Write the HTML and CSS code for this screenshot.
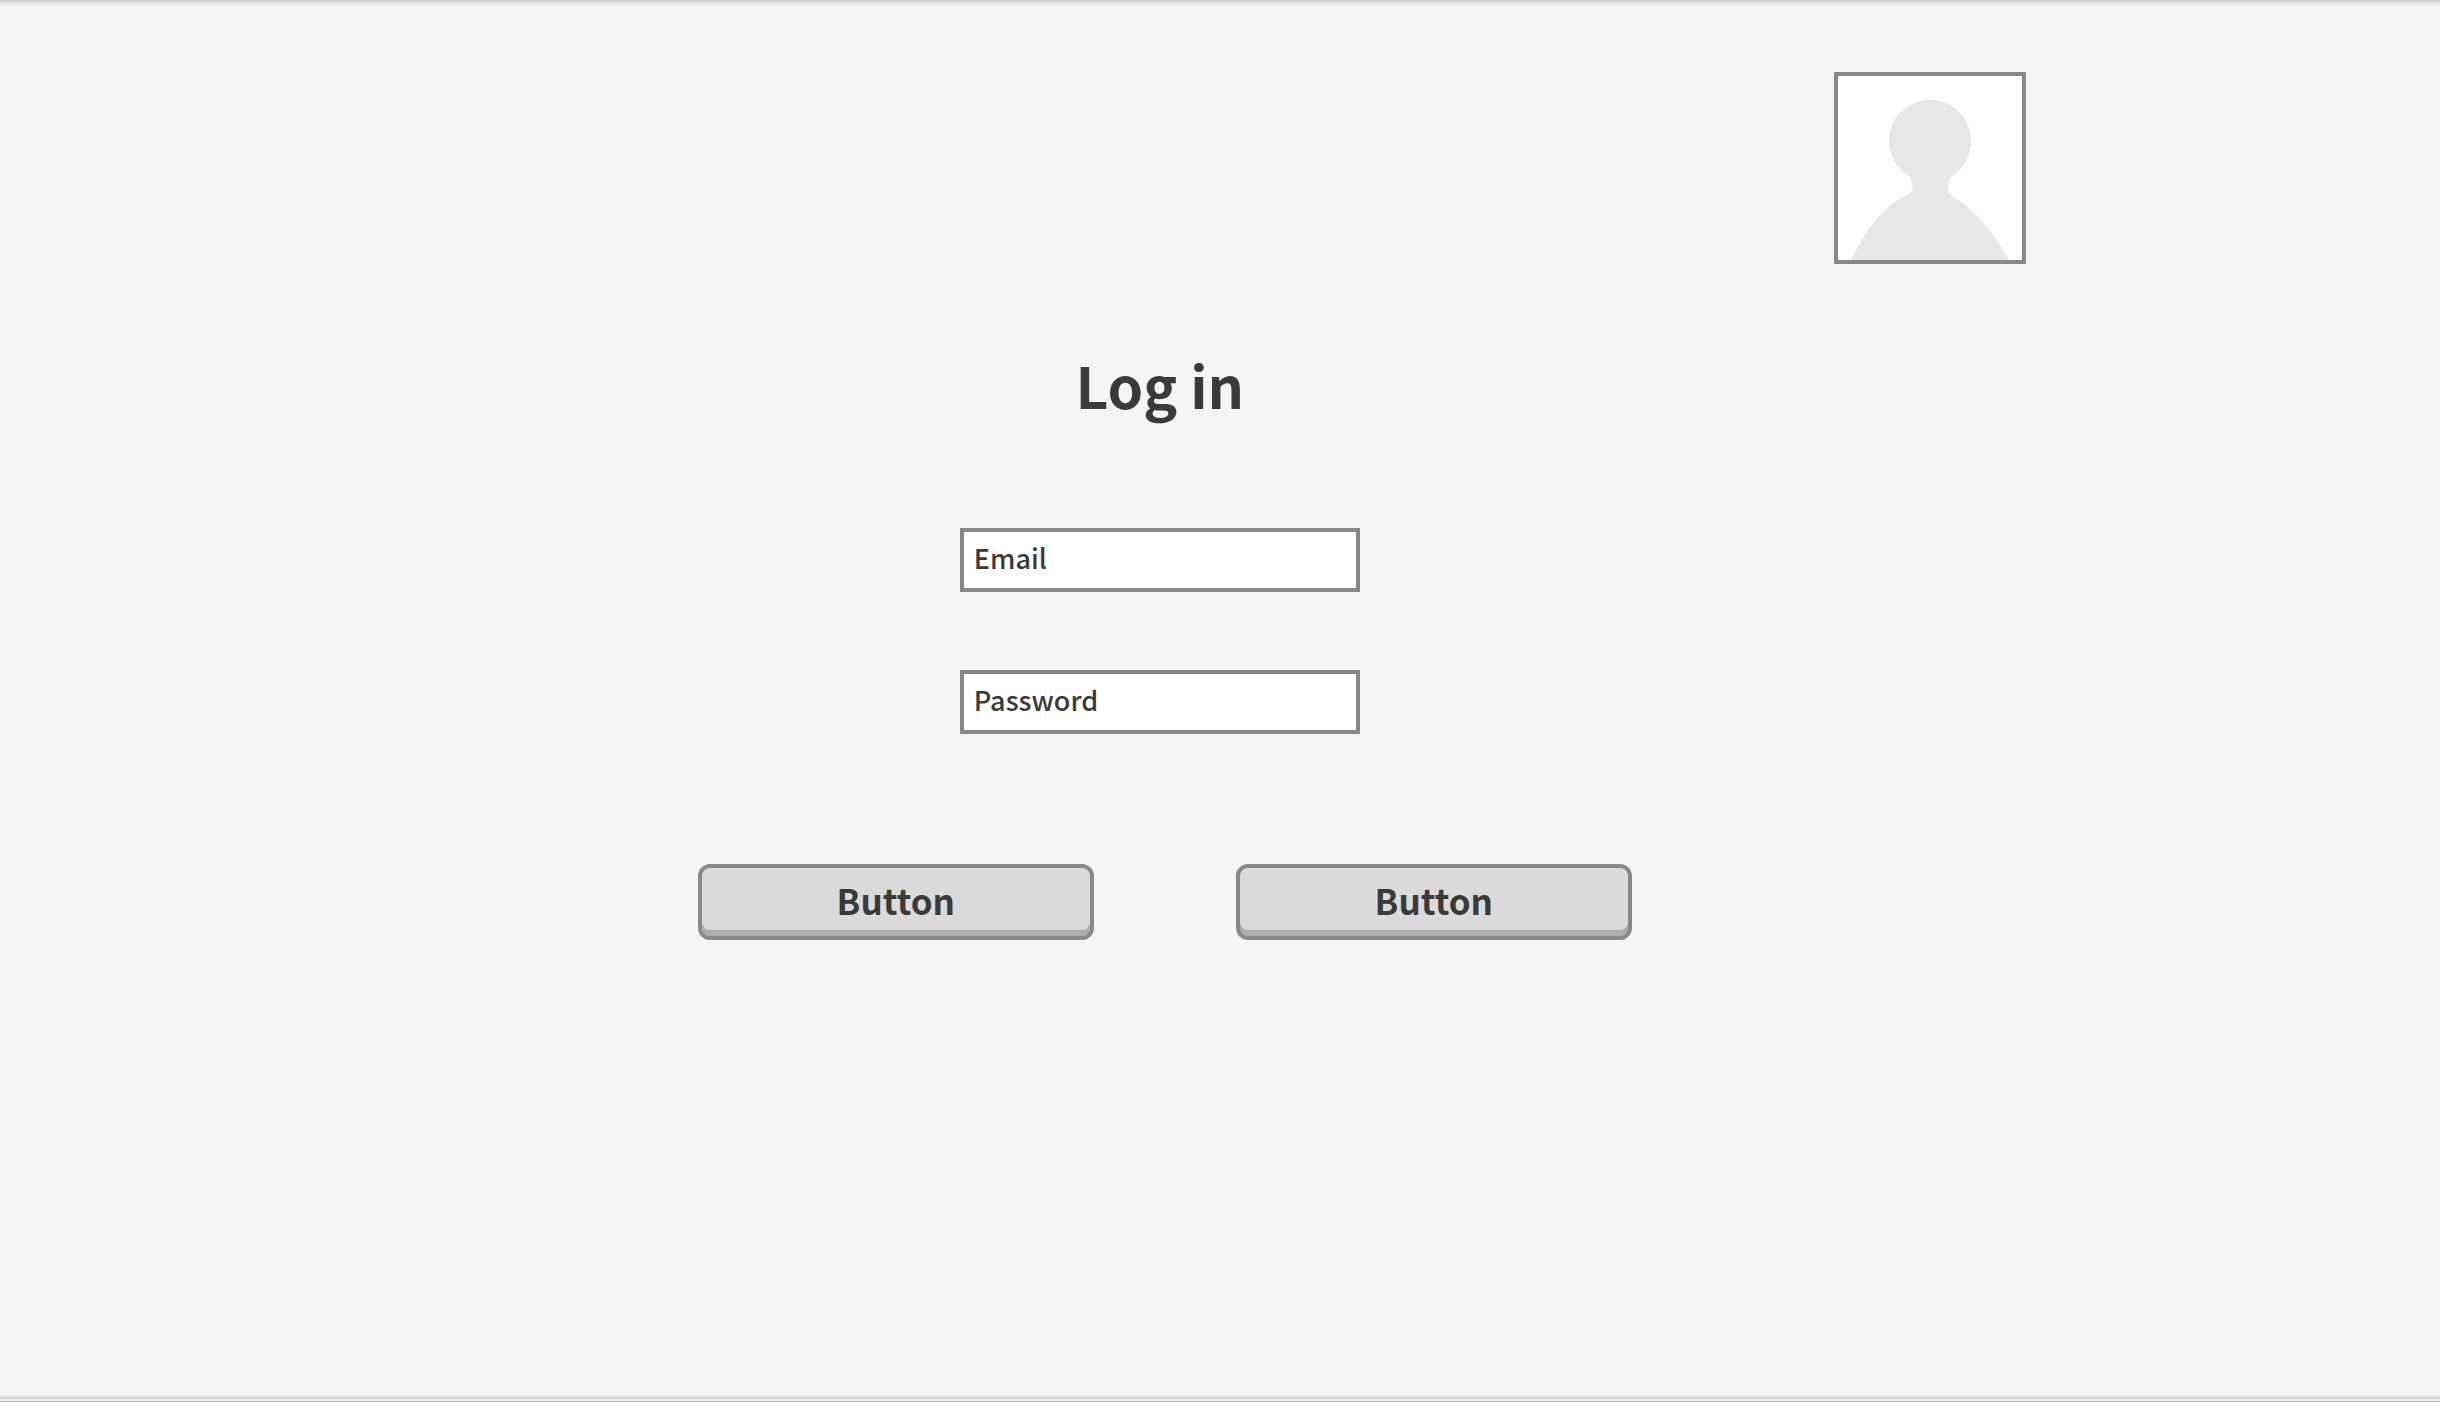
FILE: index.html
```html
<!DOCTYPE html>
<html lang="en">
<head>
<meta charset="utf-8">
<meta name="viewport" content="width=device-width, initial-scale=1">
<title>Log in</title>
<link rel="stylesheet" href="styles.css">
</head>
<body>
<header class="header">
  <svg class="avatar" viewBox="0 0 184 184" role="img" aria-label="Profile picture">
    <path d="M92 24C69 24 51 42 51 65C51 81 59 93 72 101C75 107 75 113 73 117Q39 130 13 184H171Q144 136 112 119C109 114 110 107 113 101C124 94 133 82 133 65C133 42 115 24 92 24Z"/>
  </svg>
</header>
<main class="main">
  <form class="login">
    <div class="fields">
      <h1 class="title">Log in</h1>
      <input class="input" type="email" placeholder="Email" aria-label="Email">
      <input class="input" type="password" placeholder="Password" aria-label="Password">
    </div>
    <div class="actions">
      <button class="button" type="submit">Button</button>
      <button class="button" type="button">Button</button>
    </div>
  </form>
</main>
<footer class="footer"></footer>
</body>
</html>
```
FILE: styles.css
```css
* { box-sizing: border-box; }

body {
  margin: 0;
  min-height: 100vh;
  display: flex;
  flex-direction: column;
  background: linear-gradient(#cbcbcb, #e6e6e6 3px, #f5f5f5 7px) #f5f5f5;
  color: #3a3a3a;
  font-family: "Noto Sans CJK SC", "Noto Sans", sans-serif;
}

.header {
  display: flex;
  justify-content: flex-end;
  padding: 72px 16.96% 0 0;
}

.avatar {
  width: 192px;
  height: 192px;
  border: 4px solid #888;
  background: #fff;
  fill: #e7e7e7;
}

.main {
  flex: 1;
  padding: 84px 0 0 28.6%;
}

.login {
  width: 934px;
  max-width: 100%;
}

.fields {
  display: flex;
  flex-direction: column;
  align-items: center;
  gap: 78px;
  padding-right: 10px;
}

.title {
  margin: 0 0 30px;
  font-size: 57px;
  line-height: 72px;
  font-weight: 700;
}

.input {
  width: 400px;
  height: 64px;
  padding: 0 10px 6px;
  border: 4px solid #888;
  border-radius: 0;
  background: #fff;
  color: inherit;
  font: 500 27px/40px "Noto Sans CJK SC", "Noto Sans", sans-serif;
}

.input::placeholder {
  color: #3a3a3a;
  opacity: 1;
}

.actions {
  display: flex;
  flex-wrap: wrap;
  gap: 142px;
  margin-top: 130px;
}

.button {
  width: 396px;
  height: 76px;
  padding: 0 0 4px;
  border: 4px solid #888;
  border-radius: 12px;
  background: #dadada;
  box-shadow: inset 0 -6px #adadad;
  color: inherit;
  font: 700 35px/48px "Noto Sans CJK SC", "Noto Sans", sans-serif;
}

.footer {
  height: 8px;
  background: linear-gradient(#fff 1px, #e8e8e8 1px 3px, #d2d2d2 3px 5px, #f0f0f0 5px 7px, #b5b5b5 7px);
}
```
